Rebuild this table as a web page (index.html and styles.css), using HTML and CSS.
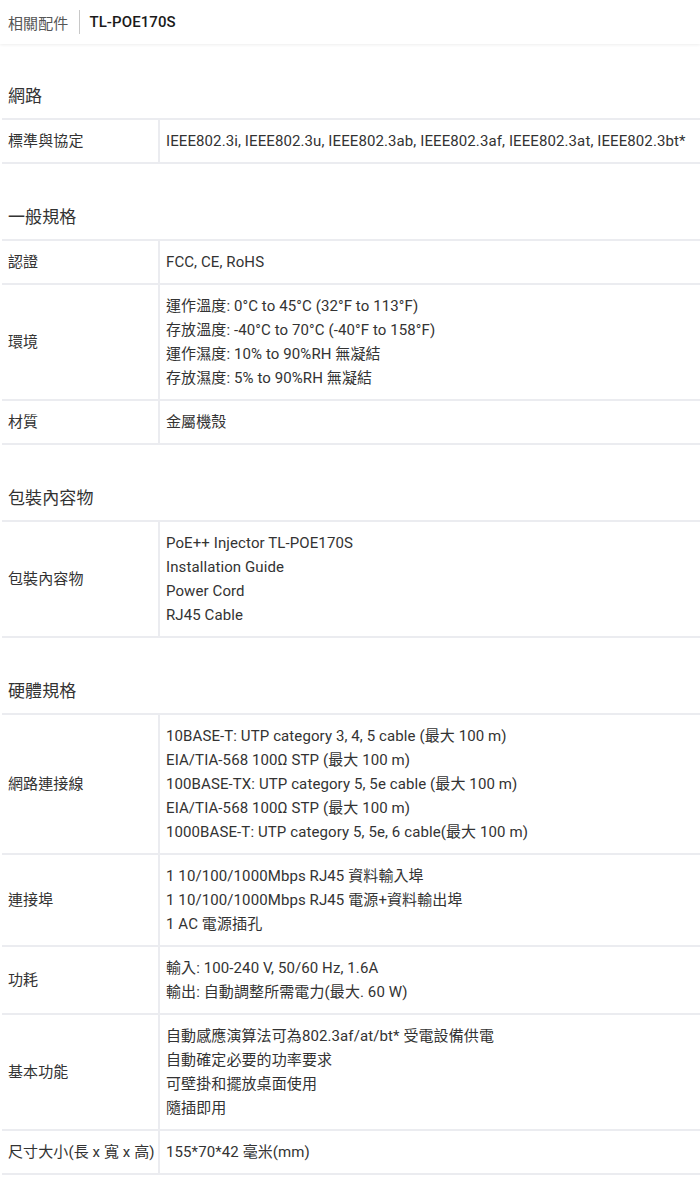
FILE: index.html
```html
<!DOCTYPE html>
<html lang="zh-Hant">
<head>
<meta charset="utf-8">
<link rel="stylesheet" href="styles.css">
</head>
<body>
<header class="topbar">
  <span class="crumb">相關配件</span>
  <span class="sep"></span>
  <span class="model">TL-POE170S</span>
</header>
<main class="specs">
  <section class="group">
    <h2 class="group-title">網路</h2>
    <table class="spec-table">
      <colgroup><col class="c-label"><col></colgroup>
      <tr><th>標準與協定</th><td class="nowrap">IEEE802.3i, IEEE802.3u, IEEE802.3ab, IEEE802.3af, IEEE802.3at, IEEE802.3bt*</td></tr>
    </table>
  </section>
  <section class="group">
    <h2 class="group-title">一般規格</h2>
    <table class="spec-table">
      <colgroup><col class="c-label"><col></colgroup>
      <tr><th>認證</th><td>FCC, CE, RoHS</td></tr>
      <tr><th>環境</th><td>運作溫度: 0°C to 45°C (32°F to 113°F)<br>存放溫度: -40°C to 70°C (-40°F to 158°F)<br>運作濕度: 10% to 90%RH 無凝結<br>存放濕度: 5% to 90%RH 無凝結</td></tr>
      <tr><th>材質</th><td>金屬機殼</td></tr>
    </table>
  </section>
  <section class="group">
    <h2 class="group-title">包裝內容物</h2>
    <table class="spec-table">
      <colgroup><col class="c-label"><col></colgroup>
      <tr><th>包裝內容物</th><td>PoE++ Injector TL-POE170S<br>Installation Guide<br>Power Cord<br>RJ45 Cable</td></tr>
    </table>
  </section>
  <section class="group">
    <h2 class="group-title">硬體規格</h2>
    <table class="spec-table">
      <colgroup><col class="c-label"><col></colgroup>
      <tr><th>網路連接線</th><td>10BASE-T: UTP category 3, 4, 5 cable (最大 100 m)<br>EIA/TIA-568 100Ω STP (最大 100 m)<br>100BASE-TX: UTP category 5, 5e cable (最大 100 m)<br>EIA/TIA-568 100Ω STP (最大 100 m)<br>1000BASE-T: UTP category 5, 5e, 6 cable(最大 100 m)</td></tr>
      <tr><th>連接埠</th><td>1 10/100/1000Mbps RJ45 資料輸入埠<br>1 10/100/1000Mbps RJ45 電源+資料輸出埠<br>1 AC 電源插孔</td></tr>
      <tr><th>功耗</th><td>輸入: 100-240 V, 50/60 Hz, 1.6A<br>輸出: 自動調整所需電力(最大. 60 W)</td></tr>
      <tr><th>基本功能</th><td>自動感應演算法可為802.3af/at/bt* 受電設備供電<br>自動確定必要的功率要求<br>可壁掛和擺放桌面使用<br>隨插即用</td></tr>
      <tr><th class="nowrap">尺寸大小(長 x 寬 x 高)</th><td>155*70*42 毫米(mm)</td></tr>
    </table>
  </section>
</main>
</body>
</html>
```

FILE: styles.css
```css
html, body {
  margin: 0;
  padding: 0;
  background: #ffffff;
}
body {
  font-family: Roboto, "Noto Sans CJK TC", sans-serif;
  color: #333333;
  font-size: 15px;
  letter-spacing: 0.1px;
  overflow-x: hidden;
}
.topbar {
  height: 44px;
  display: flex;
  align-items: center;
  padding-left: 8px;
  box-shadow: 0 1px 3px rgba(0, 0, 0, 0.07);
}
.crumb {
  font-size: 15px;
  color: #555555;
}
.sep {
  width: 1px;
  height: 24px;
  background: #c8c8c8;
  margin: 0 9px 0 11px;
}
.model {
  font-size: 15px;
  color: #1a1a1a;
  font-weight: 500;
}
.specs {
  padding-left: 2px;
}
.group-title {
  margin: 41px 0 10px 6px;
  font-size: 17px;
  font-weight: 400;
  line-height: 24px;
  color: #333333;
}
.group:first-child .group-title {
  margin-top: 40px;
}
.spec-table {
  width: 720px;
  border-collapse: collapse;
  table-layout: fixed;
}
.c-label {
  width: 157px;
}
.spec-table th,
.spec-table td {
  text-align: left;
  vertical-align: middle;
  font-weight: 400;
  line-height: 24px;
  padding: 9px 6px;
  border-top: 2px solid #ebecf0;
  border-bottom: 2px solid #ebecf0;
}
.spec-table th {
  border-right: 2px solid #ebecf0;
  padding-left: 6px;
}
.spec-table td {
  padding-left: 6px;
}
.nowrap {
  white-space: nowrap;
}
```
